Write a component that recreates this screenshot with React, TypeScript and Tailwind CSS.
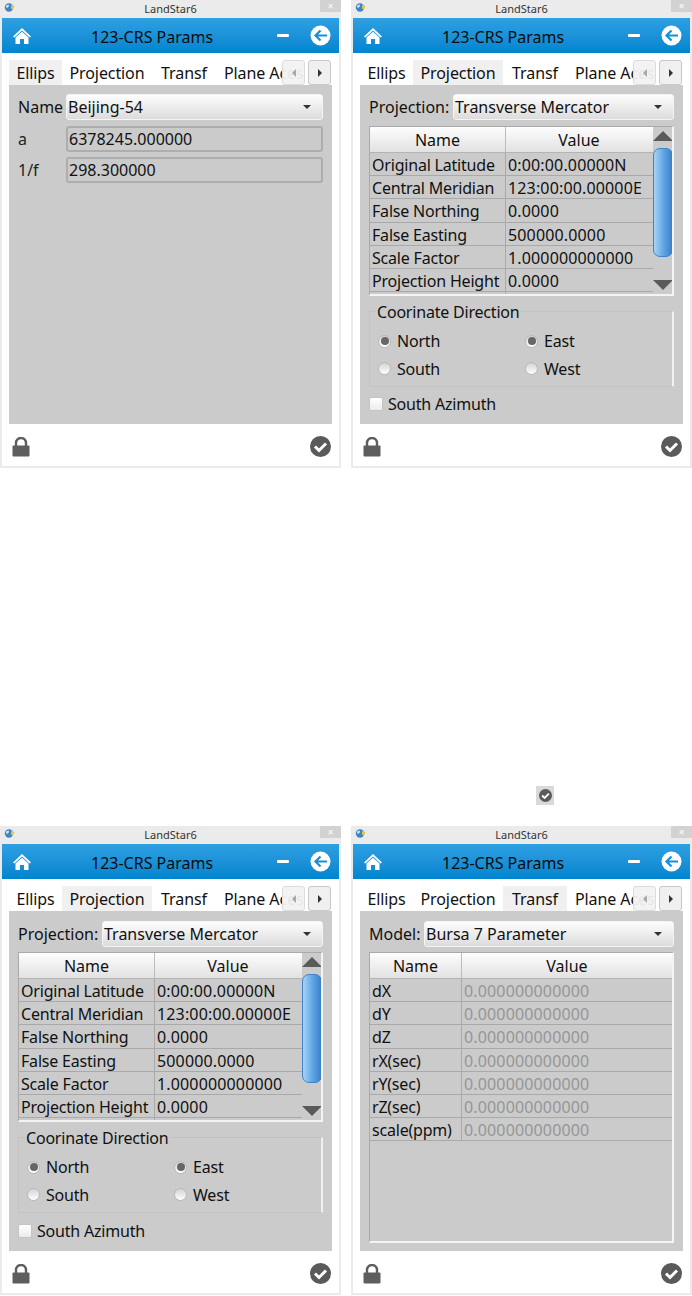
const FONT = "font-['Noto_Sans',sans-serif]"

function HomeIcon() {
  return (
    <svg width="20" height="18" viewBox="0 0 20 18">
      <path d="M10 1 L19 9.5 L17.6 10.6 L10 3.6 L2.4 10.6 L1 9.5 Z" fill="#fff" />
      <path d="M3.5 10.5 L10 4.8 L16.5 10.5 V17 H12 V12 H8 V17 H3.5 Z" fill="#fff" />
    </svg>
  )
}

function BackIcon() {
  return (
    <svg width="21" height="21" viewBox="0 0 21 21">
      <circle cx="10.5" cy="10.5" r="10" fill="#fff" />
      <path d="M17 10.5 H6.5 M10.5 5.5 L5.5 10.5 L10.5 15.5" fill="none" stroke="#1890d8" strokeWidth="2.2" />
    </svg>
  )
}

function LockIcon() {
  return (
    <svg width="18" height="20" viewBox="0 0 18 20">
      <path d="M4 9 V6 a5 5 0 0 1 10 0 V9" fill="none" stroke="#5e5e5e" strokeWidth="2.4" />
      <rect x="0.5" y="8.5" width="17" height="11" rx="1" fill="#5e5e5e" />
    </svg>
  )
}

function CheckIcon({ size = 21 }: { size?: number }) {
  return (
    <svg width={size} height={size} viewBox="0 0 21 21">
      <circle cx="10.5" cy="10.5" r="10.5" fill="#5a5a5a" />
      <path d="M5 10.5 L9 14.5 L16 7.5" fill="none" stroke="#fff" strokeWidth="3" />
    </svg>
  )
}

function GlobeIcon() {
  return (
    <svg width="11" height="9" viewBox="0 0 11 9">
      <circle cx="5" cy="4.5" r="4.2" fill="#3d86c6" />
      <path d="M2 2.5 L5 1.5 L4.5 4 L2.5 5 Z" fill="#dfeaf4" />
      <path d="M7 2 L10.5 3 L9 6.5 L7 5.5 Z" fill="#d9c94f" />
    </svg>
  )
}

function Combo({ text, width }: { text: string; width: string }) {
  return (
    <div className={`${width} h-[26px] flex items-center justify-between pl-[1px] pr-[11px] rounded-[3px] border border-[#f4f4f4] bg-gradient-to-b from-[#fdfdfd] to-[#dcdcdc] text-[16px] text-[#111]`}>
      <span>{text}</span>
      <span className="w-0 h-0 border-x-[4px] border-x-transparent border-t-[4px] border-t-[#333]" />
    </div>
  )
}

function Radio({ label, checked }: { label: string; checked?: boolean }) {
  return (
    <div className="flex items-center gap-[6px] h-[20px]">
      <span className="w-[13px] h-[13px] rounded-full bg-gradient-to-b from-[#d4d4d4] to-white border border-[#b8b8b8] flex items-center justify-center">
        {checked && <span className="w-[8px] h-[8px] rounded-full bg-[#666]" />}
      </span>
      <span className="text-[16px] tracking-[-0.2px] text-[#111]">{label}</span>
    </div>
  )
}

function HeaderRow({ first, second }: { first: string; second: string }) {
  return (
    <div className="flex h-[26px] shrink-0 bg-gradient-to-b from-[#fdfdfd] to-[#e2e2e2] border-b border-[#b4b4b4] text-[16px] text-[#111]">
      <div className={`${first} flex items-center justify-center border-r border-[#bcbcbc]`}>Name</div>
      <div className={`${second} flex items-center justify-center`}>Value</div>
    </div>
  )
}

function TableRow({ name, value, first, second, muted }: { name: string; value: string; first: string; second: string; muted?: boolean }) {
  return (
    <div className="flex h-[23.2px] shrink-0 border-b border-[#a9a9a9] text-[16px] leading-[22px]">
      <div className={`${first} pl-[2px] pt-[1px] tracking-[-0.2px] text-[#111] border-r border-[#a9a9a9] whitespace-nowrap`}>{name}</div>
      <div className={`${second} pl-[2px] pt-[1px] tracking-[0.15px] whitespace-nowrap ${muted ? 'text-[#969696]' : 'text-[#111]'}`}>{value}</div>
    </div>
  )
}

function EllipsPanel() {
  return (
    <div className="flex flex-col gap-[5px] pt-[9px] px-[9px]">
      <div className="flex items-center mb-[1px]">
        <span className="w-[48px] text-[16px] text-[#111]">Name</span>
        <Combo text="Beijing-54" width="w-[257px]" />
      </div>
      {[['a', '6378245.000000'], ['1/f', '298.300000']].map(([label, value]) => (
        <div key={label} className="flex items-center">
          <span className="w-[48px] text-[16px] text-[#222]">{label}</span>
          <div className="w-[257px] h-[26px] flex items-center pl-[1px] rounded-[3px] border-2 border-[#adadad] text-[16px] text-[#111]">
            {value}
          </div>
        </div>
      ))}
    </div>
  )
}

const projectionRows = [
  ['Original Latitude', '0:00:00.00000N'],
  ['Central Meridian', '123:00:00.00000E'],
  ['False Northing', '0.0000'],
  ['False Easting', '500000.0000'],
  ['Scale Factor', '1.000000000000'],
  ['Projection Height', '0.0000'],
  ['', ''],
]

function ProjectionPanel({ lower }: { lower?: boolean }) {
  return (
    <div className="flex flex-col pt-[9px] px-[9px]">
      <div className="flex items-center">
        <span className="w-[84px] text-[16px] text-[#111]">Projection:</span>
        <Combo text="Transverse Mercator" width="w-[221px]" />
      </div>
      <div className={`${lower ? 'mt-[5px]' : 'mt-[6px]'} h-[170px] flex border-l border-t border-[#a9a9a9] border-r-2 border-r-[#f4f4f4] border-b-2 border-b-[#f4f4f4] overflow-hidden`}>
        <div className="w-[283px] flex flex-col">
          <HeaderRow first="w-[136px]" second="w-[146px]" />
          {projectionRows.map(([name, value], i) => (
            <TableRow key={i} name={name} value={value} first="w-[136px]" second="w-[147px]" />
          ))}
        </div>
        <div className="flex-1 flex flex-col items-center pt-[4px]">
          <span className="w-0 h-0 border-x-[10px] border-x-transparent border-b-[10px] border-b-[#5a5a5a]" />
          <div className="mt-[7px] w-[20px] h-[109px] rounded-[7px] border border-[#3f82c8] bg-gradient-to-r from-[#a8d4f5] via-[#62a8e6] to-[#3a80c8]" />
          <span className="mt-[23px] w-0 h-0 border-x-[10px] border-x-transparent border-t-[10px] border-t-[#5a5a5a]" />
        </div>
      </div>
      <div className="relative mt-[15px] h-[76px] border-t border-l border-[#c3c3c3] border-b border-r-2 border-r-[#f0f0f0] px-[8px] pt-[19px]">
        <span className="absolute left-[6px] -top-[11px] px-[1px] bg-[#cbcbcb] text-[16px] tracking-[-0.2px] leading-[22px] text-[#111]">Coorinate Direction</span>
        <div className="grid grid-cols-[147px_1fr] gap-y-[7.5px]">
          <Radio label="North" checked />
          <Radio label="East" checked />
          <Radio label="South" />
          <Radio label="West" />
        </div>
      </div>
      <div className={`${lower ? 'mt-[8px]' : 'mt-[7px]'} flex items-center gap-[5px] h-[20px]`}>
        <span className="w-[14px] h-[14px] rounded-[2px] bg-gradient-to-b from-white to-[#ececec] border border-[#c4c4c4]" />
        <span className="text-[16px] tracking-[-0.2px] text-[#111]">South Azimuth</span>
      </div>
    </div>
  )
}

const transfRows = ['dX', 'dY', 'dZ', 'rX(sec)', 'rY(sec)', 'rZ(sec)', 'scale(ppm)']

function TransfPanel() {
  return (
    <div className="flex flex-col pt-[9px] px-[9px]">
      <div className="flex items-center">
        <span className="w-[55px] text-[16px] text-[#111]">Model:</span>
        <Combo text="Bursa 7 Parameter" width="w-[250px]" />
      </div>
      <div className="mt-[5px] h-[291px] flex flex-col border-l border-t border-[#a9a9a9] border-r-2 border-r-[#f4f4f4] border-b-2 border-b-[#f4f4f4]">
        <HeaderRow first="w-[92px]" second="flex-1" />
        {transfRows.map(name => (
          <TableRow key={name} name={name} value="0.000000000000" first="w-[92px]" second="flex-1" muted />
        ))}
      </div>
    </div>
  )
}

const tabs = [
  { label: 'Ellips', width: 'w-[53px]' },
  { label: 'Projection', width: 'w-[90px]' },
  { label: 'Transf', width: 'w-[64px]' },
]

function Window({ active, lower, children }: { active: number; lower?: boolean; children: React.ReactNode }) {
  return (
    <div className={`w-[341px] bg-[#ebebeb] ${FONT}`}>
      <div className="relative h-[18px] flex items-center justify-center text-[11px] text-[#333]">
        <span className="absolute left-[4px] top-[3px] flex"><GlobeIcon /></span>
        LandStar6
        <span className="absolute right-0 top-0 w-[21px] h-[12px] bg-[#d2d2d2] text-white text-[10px] leading-[12px] text-center">×</span>
      </div>
      <div className="mx-[2px] mb-[2px] bg-white flex flex-col">
        <div className="h-[35px] flex items-center pl-[10px] bg-gradient-to-b from-[#2da0e2] to-[#0084cf]">
          <HomeIcon />
          <span className="ml-[59px] pt-[2px] w-[186px] text-[16px] text-[#0b0b0b]">123-CRS Params</span>
          <span className="w-[12px] h-[3px] bg-white rounded-[1px]" />
          <span className="ml-[21px]"><BackIcon /></span>
        </div>
        <div className="relative h-[32px] pt-[7px] pl-[7px] flex text-[16px] tracking-[-0.1px] text-[#111]">
          {tabs.map((tab, i) => (
            <div key={tab.label} className={`${tab.width} h-[25px] flex items-center justify-center ${i === active ? 'bg-[#f0f0f0]' : ''}`}>
              {tab.label}
            </div>
          ))}
          <div className="w-[89px] h-[25px] pl-[8px] flex items-center overflow-hidden whitespace-nowrap">Plane Acess</div>
          <div className="absolute left-[280px] top-[7px] w-[23px] h-[25px] flex items-center justify-center rounded-[3px] bg-[#f2f2f2]/95 border border-[#dcdcdc]">
            <span className="w-0 h-0 border-y-[4px] border-y-transparent border-r-[4px] border-r-[#a8a8a8]" />
          </div>
          <div className="absolute left-[306px] top-[7px] w-[23px] h-[25px] flex items-center justify-center rounded-[3px] bg-[#f0f0f0] border border-[#c8c8c8]">
            <span className="w-0 h-0 border-y-[4px] border-y-transparent border-l-[4px] border-l-[#333]" />
          </div>
        </div>
        <div className={`mx-[7px] bg-[#cbcbcb] ${lower ? 'h-[340px] pt-[1px]' : 'h-[339px]'}`}>{children}</div>
        <div className="h-[42px] flex items-center justify-between pl-[10px] pr-[8px] pt-[3px]">
          <LockIcon />
          <CheckIcon />
        </div>
      </div>
    </div>
  )
}

export default function App() {
  return (
    <div className="w-[692px] h-[1296px] bg-white overflow-hidden">
      <div className="flex gap-[10px] h-[468px]">
        <Window active={0}><EllipsPanel /></Window>
        <Window active={1}><ProjectionPanel /></Window>
      </div>
      <div className="h-[358px] pt-[318px] pl-[536px]">
        <div className="w-[18px] h-[19px] bg-[#d9d9d9] flex items-center justify-center">
          <CheckIcon size={13} />
        </div>
      </div>
      <div className="flex gap-[10px]">
        <Window active={1} lower><ProjectionPanel lower /></Window>
        <Window active={2} lower><TransfPanel /></Window>
      </div>
    </div>
  )
}
